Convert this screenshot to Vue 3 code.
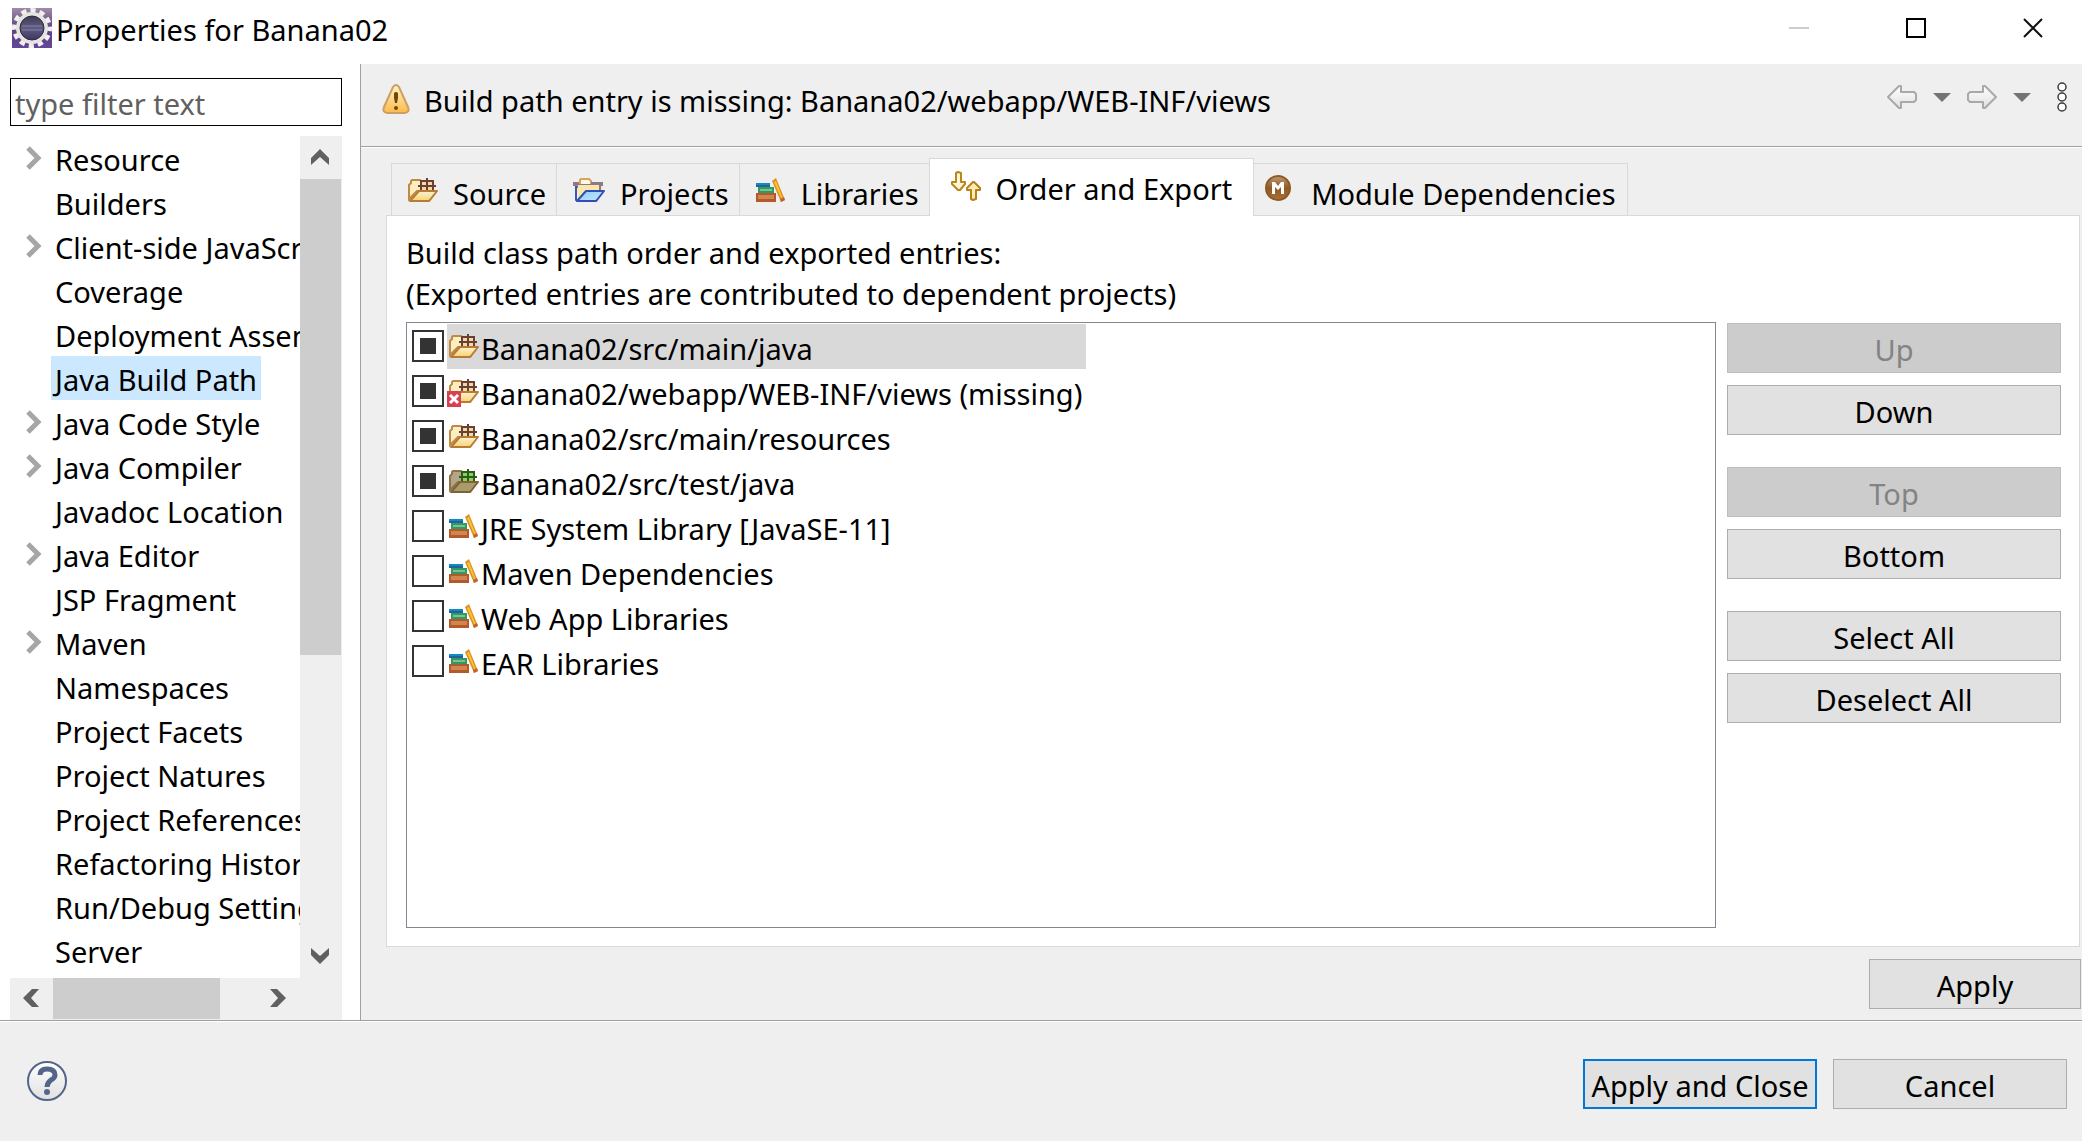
<script setup>
import { ref } from 'vue'

const tree = [
  { label: 'Resource', children: true },
  { label: 'Builders' },
  { label: 'Client-side JavaScript', children: true },
  { label: 'Coverage' },
  { label: 'Deployment Assembly' },
  { label: 'Java Build Path', selected: true },
  { label: 'Java Code Style', children: true },
  { label: 'Java Compiler', children: true },
  { label: 'Javadoc Location' },
  { label: 'Java Editor', children: true },
  { label: 'JSP Fragment' },
  { label: 'Maven', children: true },
  { label: 'Namespaces' },
  { label: 'Project Facets' },
  { label: 'Project Natures' },
  { label: 'Project References' },
  { label: 'Refactoring History' },
  { label: 'Run/Debug Settings' },
  { label: 'Server' }
]

const tabs = [
  { label: 'Source', icon: 'folder', box: '0 0 30 24', w: 30, h: 24 },
  { label: 'Projects', icon: 'project', box: '0 0 32 24', w: 32, h: 24 },
  { label: 'Libraries', icon: 'books', box: '0 0 30 24', w: 30, h: 24 },
  { label: 'Order and Export', icon: 'order', box: '0 0 30 30', w: 30, h: 30, active: true },
  { label: 'Module Dependencies', icon: 'module', box: '0 0 26 26', w: 26, h: 26, wide: true }
]

const entries = ref([
  { label: 'Banana02/src/main/java', icon: 'folder', checked: true, selected: true },
  { label: 'Banana02/webapp/WEB-INF/views (missing)', icon: 'folder', checked: true, missing: true },
  { label: 'Banana02/src/main/resources', icon: 'folder', checked: true },
  { label: 'Banana02/src/test/java', icon: 'test-folder', checked: true },
  { label: 'JRE System Library [JavaSE-11]', icon: 'books', checked: false },
  { label: 'Maven Dependencies', icon: 'books', checked: false },
  { label: 'Web App Libraries', icon: 'books', checked: false },
  { label: 'EAR Libraries', icon: 'books', checked: false }
])

const actionGroups = [
  [{ label: 'Up', disabled: true }, { label: 'Down' }],
  [{ label: 'Top', disabled: true }, { label: 'Bottom' }],
  [{ label: 'Select All' }, { label: 'Deselect All' }]
]
</script>

<template>
  <div class="window">
    <svg class="sheet" aria-hidden="true">
      <defs>
        <linearGradient id="paper" x1="0" y1="0" x2="0" y2="1">
          <stop offset="0" stop-color="#fff3cf" /><stop offset="1" stop-color="#f6d272" />
        </linearGradient>
        <linearGradient id="sky" x1="0" y1="0" x2="1" y2="1">
          <stop offset="0" stop-color="#8fcaf6" /><stop offset="1" stop-color="#c4e8ff" />
        </linearGradient>
        <linearGradient id="amber" x1="0" y1="0" x2="0" y2="1">
          <stop offset="0" stop-color="#fff3c8" /><stop offset="1" stop-color="#fbbb4a" />
        </linearGradient>
        <linearGradient id="bronze" x1="0" y1="0" x2="0" y2="1">
          <stop offset="0" stop-color="#c09a72" /><stop offset="0.5" stop-color="#8f5a22" /><stop offset="1" stop-color="#a9713a" />
        </linearGradient>
        <linearGradient id="violet" x1="0" y1="0" x2="0" y2="1">
          <stop offset="0" stop-color="#a08ca4" /><stop offset="0.5" stop-color="#5b4486" /><stop offset="1" stop-color="#63459a" />
        </linearGradient>
        <linearGradient id="lens" x1="0" y1="0" x2="0" y2="1">
          <stop offset="0" stop-color="#3a3648" /><stop offset="0.5" stop-color="#5f5a84" /><stop offset="1" stop-color="#3a2f5a" />
        </linearGradient>
        <linearGradient id="pale" x1="0" y1="0" x2="0" y2="1">
          <stop offset="0" stop-color="#ffffff" /><stop offset="1" stop-color="#e0e0e0" />
        </linearGradient>
      </defs>
      <symbol id="folder" viewBox="0 0 30 24">
        <path d="M1 21V7l2-2V3l1-1h8l2 2h11v9H9L1 21z" fill="#fdeec2" stroke="#c08a45" stroke-width="2" />
        <path d="M12 2h14v10H12z" fill="#f3d9a4" />
        <path d="M13 2v10M19 0v13M25 2v10M12 3h14M10 8h18" fill="none" stroke="#6b4034" stroke-width="2" />
        <path d="M2 23L11 13h18l-7 9-1 1z" fill="url(#paper)" stroke="#b67c35" stroke-width="2" stroke-linejoin="round" />
      </symbol>
      <symbol id="test-folder" viewBox="0 0 30 24">
        <path d="M1 21V7l2-2V3l1-1h8l2 2h11v9H9L1 21z" fill="#b3a78a" stroke="#8f7247" stroke-width="2" />
        <path d="M12 2h14v10H12z" fill="#86d45a" />
        <path d="M13 2v10M19 0v13M25 2v10M12 3h14M10 8h18" fill="none" stroke="#2f5a1c" stroke-width="2" />
        <path d="M2 23L11 13h18l-7 9-1 1z" fill="#aa9b6b" stroke="#806332" stroke-width="2" stroke-linejoin="round" />
      </symbol>
      <symbol id="project" viewBox="0 0 32 24">
        <path d="M7 6V2l1-1h8l2 2v3" fill="#fff8e2" stroke="#d3a560" stroke-width="2" />
        <path d="M4 6h25v8H4z" fill="#fbe7ae" />
        <path d="M0 4h6v2h12V4h12v4h-2v5h-2V7H5v3H2V8H0z" fill="#8c7a86" />
        <path d="M3 8v14l2 1" fill="none" stroke="#3a55b8" stroke-width="2" />
        <path d="M5 7h21v6H13L5 21z" fill="#fbe7ae" />
        <path d="M4 23L13 13h18l-7 9-1 1z" fill="url(#sky)" stroke="#2f4fb5" stroke-width="2" stroke-linejoin="round" />
      </symbol>
      <symbol id="books" viewBox="0 0 30 24">
        <path d="M0 5h14v4H0z" fill="#0c8cc8" /><path d="M0 7h14v2H0z" fill="#2a5f96" />
        <path d="M2 9h16v6H2z" fill="#2b9c66" /><path d="M4 11h12v2H4z" fill="#7fc08c" />
        <path d="M0 15h20v9H0z" fill="#b5592a" /><path d="M2 17h16v4H2z" fill="#cf8650" />
        <path d="M16 3l4-3 9 22-4 2z" fill="#de8f2c" /><path d="M18 4l2-1 7 18-1 1z" fill="#f5c82c" />
        <path d="M25 24l4-2-1-3-4 2z" fill="#c4622e" />
      </symbol>
      <symbol id="order" viewBox="0 0 30 30">
        <path d="M5 2l2-1 3 1v9h4v2l-5 6h-2L1 13v-2h4z" fill="#fff6d5" stroke="#b8871f" stroke-width="2" stroke-linejoin="round" />
        <path d="M20 28l2 1 3-1v-9h4v-2l-6-6h-1l-6 6v2h4z" fill="#ffedb5" stroke="#b8801a" stroke-width="2" stroke-linejoin="round" />
      </symbol>
      <symbol id="module" viewBox="0 0 26 26">
        <circle cx="13" cy="13" r="12" fill="url(#bronze)" stroke="#8c5a25" stroke-width="2" />
        <path d="M7 19V7h3l3 4 3-4h3v12h-3v-7l-3 3-3-3v7z" fill="#fff" />
      </symbol>
      <symbol id="arrow-back" viewBox="0 0 30 24">
        <path d="M1 12L12 1h2v6h13l2 2v6l-2 2H14v6h-2z" fill="url(#pale)" stroke="#a9a9a9" stroke-width="2" stroke-linejoin="round" />
      </symbol>
      <symbol id="arrow-down" viewBox="0 0 18 16">
        <path d="M0 0l9 8 9-8v7l-9 9-9-9z" fill="#606060" />
      </symbol>
    </svg>

    <header class="titlebar">
      <svg class="logo" width="40" height="40" viewBox="0 0 40 40" aria-hidden="true">
        <path d="M0 0h40v40H0z" fill="url(#violet)" />
        <circle cx="20" cy="20" r="17" fill="none" stroke="#f1f0ee" stroke-width="6" stroke-dasharray="5 3.9" stroke-dashoffset="2" />
        <circle cx="20" cy="20" r="14" fill="url(#lens)" stroke="#e6e4e1" stroke-width="4" />
        <circle cx="20" cy="20" r="12" fill="none" stroke="#2c2838" stroke-width="1" />
        <path d="M10 18h20M10 22h20" stroke="#706b90" stroke-width="2" />
      </svg>
      <h1 class="title">Properties for Banana02</h1>
      <div class="controls">
        <button class="control" aria-label="Minimize" disabled>
          <svg width="20" height="20"><path d="M0 10h20" stroke="#ccc" stroke-width="2" /></svg>
        </button>
        <button class="control" aria-label="Maximize">
          <svg width="20" height="20"><path d="M1 1h18v18H1z" fill="none" stroke="#000" stroke-width="2" /></svg>
        </button>
        <button class="control" aria-label="Close">
          <svg width="20" height="20"><path d="M1 1l18 18M19 1L1 19" stroke="#111" stroke-width="2" /></svg>
        </button>
      </div>
    </header>

    <div class="body">
      <aside class="sidebar">
        <input class="filter" type="text" placeholder="type filter text" aria-label="type filter text" />
        <div class="browser">
          <ul class="tree" role="tree">
            <li v-for="item in tree" :key="item.label" class="node" role="treeitem" :aria-selected="!!item.selected">
              <span class="twisty">
                <svg v-if="item.children" width="16" height="24"><path d="M2 2l10 10L2 22" fill="none" stroke="#a6a6a6" stroke-width="5" /></svg>
              </span>
              <span class="node-label" :class="{ picked: item.selected }">{{ item.label }}</span>
            </li>
          </ul>
          <div class="vbar">
            <button class="step" aria-label="Scroll up"><svg class="flip" width="18" height="16"><use href="#arrow-down" /></svg></button>
            <div class="vtrack"><div class="vthumb"></div></div>
            <button class="step" aria-label="Scroll down"><svg width="18" height="16"><use href="#arrow-down" /></svg></button>
          </div>
          <div class="hbar">
            <button class="step" aria-label="Scroll left"><svg class="left" width="18" height="16"><use href="#arrow-down" /></svg></button>
            <div class="htrack"><div class="hthumb"></div></div>
            <button class="step" aria-label="Scroll right"><svg class="right" width="18" height="16"><use href="#arrow-down" /></svg></button>
          </div>
          <div class="corner"></div>
        </div>
      </aside>

      <main class="main">
        <div class="message">
          <svg width="28" height="30" viewBox="0 0 28 30" aria-hidden="true">
            <path d="M11 3q3-4 6 0l9 20q2 5-3 6H5q-5-1-3-6z" fill="url(#amber)" stroke="#cf9f62" stroke-width="2" />
            <path d="M12 9q2-2 4 0v5l-1 5h-2l-1-5z" fill="#6e4709" /><circle cx="14" cy="24" r="2" fill="#6e4709" />
          </svg>
          <p class="message-text">Build path entry is missing: Banana02/webapp/WEB-INF/views</p>
          <div class="tools">
            <button class="tool" aria-label="Back" disabled><svg width="30" height="24"><use href="#arrow-back" /></svg></button>
            <button class="tool" aria-label="Back history"><svg width="18" height="10"><path d="M0 1h18l-9 9z" fill="#747477" /></svg></button>
            <button class="tool" aria-label="Forward" disabled><svg class="mirror" width="30" height="24"><use href="#arrow-back" /></svg></button>
            <button class="tool" aria-label="Forward history"><svg width="18" height="10"><path d="M0 1h18l-9 9z" fill="#747477" /></svg></button>
            <button class="tool menu" aria-label="View menu">
              <svg width="10" height="30" fill="#fff" stroke="#3c3c3c" stroke-width="1.5"><circle cx="5" cy="5" r="4" /><circle cx="5" cy="15" r="4" /><circle cx="5" cy="25" r="4" /></svg>
            </button>
          </div>
        </div>

        <div class="content">
          <div class="tabs" role="tablist">
            <button v-for="tab in tabs" :key="tab.label" class="tab" :class="{ active: tab.active, wide: tab.wide }" role="tab" :aria-selected="!!tab.active">
              <svg :width="tab.w" :height="tab.h" :viewBox="tab.box" aria-hidden="true"><use :href="'#' + tab.icon" /></svg>
              <span class="tab-label">{{ tab.label }}</span>
            </button>
          </div>

          <section class="page">
            <p class="intro">Build class path order and exported entries:<br />(Exported entries are contributed to dependent projects)</p>
            <div class="split">
              <ul class="entries">
                <li v-for="entry in entries" :key="entry.label">
                  <label class="entry">
                    <input v-model="entry.checked" class="check" type="checkbox" />
                    <span class="entry-body" :class="{ chosen: entry.selected }">
                      <svg width="30" height="24" viewBox="0 0 30 24" aria-hidden="true"><use :href="'#' + entry.icon" /></svg>
                      <svg v-if="entry.missing" class="badge" width="14" height="16" aria-hidden="true"><path d="M0 0h14v16H0z" fill="#d9404f" /><path d="M3 4l8 8M11 4l-8 8" stroke="#fff" stroke-width="3" /></svg>
                      <span class="entry-label">{{ entry.label }}</span>
                    </span>
                  </label>
                </li>
              </ul>
              <div class="actions">
                <div v-for="(group, i) in actionGroups" :key="i" class="group">
                  <button v-for="action in group" :key="action.label" class="btn" :disabled="action.disabled">{{ action.label }}</button>
                </div>
              </div>
            </div>
          </section>

          <div class="apply-row"><button class="btn apply">Apply</button></div>
        </div>
      </main>
    </div>

    <footer class="footer">
      <button class="help" aria-label="Help">
        <svg width="40" height="40" viewBox="0 0 40 40">
          <circle cx="20" cy="20" r="19" fill="url(#pale)" stroke="#53658a" stroke-width="2" />
          <path d="M13 14q0-6 7-6 8 0 8 6 0 3-4 5-4 3-4 7" fill="none" stroke="#53658a" stroke-width="5" />
          <circle cx="20" cy="31" r="3" fill="#53658a" />
        </svg>
      </button>
      <button class="btn main-action primary">Apply and Close</button>
      <button class="btn main-action">Cancel</button>
    </footer>
  </div>
</template>

<style>
body { margin: 0; background: #fff; }
</style>

<style scoped>
.window {
  display: flex;
  flex-direction: column;
  height: 100vh;
  background: #fff;
  color: #000;
  font: 29px/41px "Noto Sans", "Open Sans", sans-serif;
}
.window * { box-sizing: border-box; }
button, input { font: inherit; color: inherit; margin: 0; padding: 0; border: 0; background: none; }
h1, p, ul { margin: 0; padding: 0; font: inherit; list-style: none; }
svg { display: block; flex: none; }
.sheet { position: absolute; width: 0; height: 0; }

.titlebar { display: flex; align-items: center; height: 64px; padding: 0 0 8px 12px; flex: none; }
.title { flex: 1; padding: 3px 0 0 4px; white-space: nowrap; }
.controls { display: flex; }
.control { display: flex; align-items: center; justify-content: center; width: 117px; height: 56px; }
.control:last-child { margin-right: -9px; }

.body { display: flex; flex: 1; min-height: 0; }

.sidebar { display: flex; flex-direction: column; width: 360px; flex: none; padding: 14px 18px 0 10px; }
.filter { width: 100%; height: 48px; flex: none; padding: 2px 5px 0 4px; border: 1px solid #000; background: #fff; outline: none; }
.filter::placeholder { color: #606060; opacity: 1; }
.browser { display: grid; grid-template: minmax(0, 1fr) 42px / minmax(0, 1fr) 42px; flex: 1; min-height: 0; margin-top: 10px; }
.tree { overflow: hidden; }
.node { display: flex; align-items: center; height: 44px; }
.twisty { width: 41px; flex: none; padding-left: 16px; }
.node-label { height: 44px; padding: 3px 4px 0; white-space: nowrap; }
.picked { background: #cce8ff; }

.vbar { display: flex; flex-direction: column; background: #efefef; }
.hbar { display: flex; background: #efefef; }
.corner { background: #efefef; }
.step { display: flex; align-items: center; justify-content: center; width: 42px; height: 43px; flex: none; padding: 0 2px 2px 0; }
.hbar .step { width: 43px; height: 42px; }
.flip { transform: rotate(180deg); }
.left { transform: rotate(90deg); }
.right { transform: rotate(-90deg); }
.vtrack { flex: 1; }
.vthumb { height: 63%; margin-right: 1px; background: #cdcdcd; }
.htrack { flex: 1; }
.hthumb { width: 82%; height: 41px; background: #cdcdcd; }

.main { display: flex; flex-direction: column; flex: 1; min-width: 0; border-left: 1px solid #a0a0a0; background: #efefef; }
.message { display: flex; align-items: center; flex: none; height: 83px; padding: 0 15px 12px 21px; border-bottom: 1px solid #a0a0a0; box-shadow: 0 1px #fff; }
.message-text { flex: 1; min-width: 0; padding: 2px 0 0 14px; white-space: nowrap; }
.tools { display: flex; align-items: center; gap: 16px; padding-bottom: 4px; }
.menu { margin-left: 10px; }
.mirror { transform: scaleX(-1); }

.content { display: flex; flex-direction: column; flex: 1; min-height: 0; padding: 11px 2px 0 25px; }
.tabs { display: flex; align-items: flex-end; flex: none; padding-left: 5px; }
.tab { display: flex; align-items: center; gap: 15px; height: 52px; padding: 0 10px 0 16px; border: 1px solid #d9d9d9; border-width: 1px 0 0 1px; white-space: nowrap; }
.tab-label { padding-top: 7px; }
.tab:last-child { border-right-width: 1px; }
.tab.active { position: relative; height: 58px; margin-bottom: -1px; padding: 0 21px; border-right-width: 1px; background: #fff; }
.tab.active svg, .tab.wide svg { margin-bottom: 4px; }
.tab.active .tab-label { padding-top: 2px; }
.tab.wide { gap: 20px; padding: 0 11px; border-left-width: 0; }

.page { display: flex; flex-direction: column; flex: 1; min-height: 0; padding: 16px 17px 18px 19px; border: 1px solid #d9d9d9; background: #fff; }
.intro { flex: none; padding-bottom: 8px; }
.split { display: flex; flex: 1; min-height: 0; gap: 11px; }
.entries { flex: 1; min-width: 0; padding: 1px 5px; border: 1px solid #828790; }
.entry { display: flex; align-items: center; height: 45px; }
.check { display: grid; place-content: center; width: 32px; height: 32px; flex: none; margin-right: 3px; margin-bottom: 1px; border: 2px solid #333; background: #fff; appearance: none; }
.check:checked::before { content: ""; width: 16px; height: 16px; background: #333; }
.entry-body { position: relative; display: flex; align-items: center; height: 45px; padding-left: 2px; }
.entry-body svg { margin-bottom: 1px; }
.entry-label { padding: 3px 0 0 2px; white-space: nowrap; }
.chosen { width: 639px; background: #d9d9d9; }
.badge { position: absolute; left: 0; bottom: 6px; }

.actions { display: flex; flex-direction: column; gap: 32px; width: 335px; flex: none; padding: 1px 1px 0 0; }
.group { display: flex; flex-direction: column; gap: 12px; }
.btn { height: 50px; padding-top: 3px; border: 1px solid #adadad; background: #e1e1e1; text-align: center; white-space: nowrap; }
.btn:disabled { border-color: #bfbfbf; background: #ccc; color: #838383; }
.apply-row { display: flex; justify-content: flex-end; flex: none; padding: 12px 0 11px; margin-right: -1px; }
.apply { width: 212px; }

.footer { display: flex; align-items: center; flex: none; height: 121px; gap: 16px; padding: 6px 15px 0 27px; border-top: 1px solid #a0a0a0; box-shadow: inset 0 1px #fff; background: #efefef; }
.footer .help { margin-right: auto; margin-bottom: 6px; }
.main-action { width: 234px; }
.primary { border: 2px solid #0078d7; }
</style>
